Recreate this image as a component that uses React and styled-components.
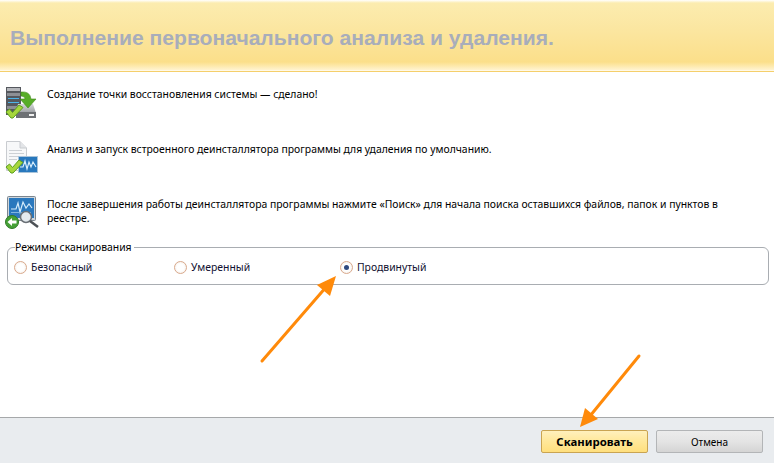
import React from "react";
import styled, { createGlobalStyle } from "styled-components";

const GlobalStyle = createGlobalStyle`
  html, body {
    margin: 0;
    padding: 0;
    background: #fff;
  }
  body {
    font-family: "Noto Sans", "Liberation Sans", Arial, sans-serif;
    overflow: hidden;
  }
`;

const CheckMark = ({ x = 0, y = 0 }) => (
  <path
    transform={`translate(${x} ${y})`}
    d="M0 7 L3.5 4 L6.5 7.5 L13 0 L17 2.5 L7 13 L5 13 Z"
    fill="#a6d63c"
    stroke="#5da01f"
    strokeWidth="1"
  />
);

const RestoreIcon = () => (
  <svg width="34" height="36" viewBox="0 0 34 36">
    <defs>
      <linearGradient id="driveFill" x1="0" y1="0" x2="0" y2="1">
        <stop offset="0" stopColor="#d4d6d8" />
        <stop offset="1" stopColor="#9c9fa3" />
      </linearGradient>
    </defs>
    <rect x="1" y="1" width="15" height="28" fill="#55585e" />
    <rect x="2" y="2" width="13" height="3" fill="#b5b7bb" />
    <rect x="2" y="7" width="13" height="3" fill="#8d9096" />
    <rect x="3" y="12" width="11" height="1" fill="#4cb5ea" />
    <rect x="3" y="16" width="11" height="1" fill="#4cb5ea" />
    <rect x="2" y="20" width="13" height="3" fill="#8d9096" />
    <path d="M13 18 L28 18 L31 27 L11 27 Z" fill="url(#driveFill)" />
    <rect x="11" y="26" width="20" height="6" fill="#6e7175" />
    <rect x="24" y="28" width="5" height="2" fill="#f2f2f2" />
    <path d="M16 6 Q25 5 26 13 L31 13 L23 22 L15 13 L20 13 Q20 10 16 10 Z" fill="#57ad28" stroke="#3f8a1a" strokeWidth="0.6" />
    <CheckMark x={1} y={19} />
  </svg>
);

const UninstallIcon = () => (
  <svg width="34" height="36" viewBox="0 0 34 36">
    <path d="M1.5 0.5 L15 0.5 L21.5 7 L21.5 29.5 L1.5 29.5 Z" fill="#f7f8f9" stroke="#c9ccd0" />
    <path d="M15 0.5 L15 7 L21.5 7" fill="#e3e5e8" stroke="#c9ccd0" />
    <path d="M4 9.5 H17 M4 12.5 H19 M4 15.5 H19 M4 18.5 H12" stroke="#cdd1d5" strokeWidth="1" />
    <rect x="13.5" y="15.5" width="19" height="16" fill="#2878bd" stroke="#a9c4da" />
    <path d="M15 26 L18 26 L20 20 L22 28 L24 21 L26 26 L28 21 L31 26" fill="none" stroke="#d8eefc" strokeWidth="1.2" />
    <CheckMark x={1} y={19} />
  </svg>
);

const ReviewIcon = () => (
  <svg width="34" height="36" viewBox="0 0 34 36">
    <rect x="2.5" y="0.5" width="28" height="24" rx="1" fill="#cfd6dc" stroke="#7b858e" />
    <rect x="4" y="2" width="25" height="20" fill="#2a78bd" />
    <path d="M6 13 L11 13 L13 7 L15 16 L18 6 L21 12 L24 8 L27 12" fill="none" stroke="#d5ecfb" strokeWidth="1.2" />
    <rect x="6" y="16" width="20" height="1" fill="#7fb6e0" />
    <circle cx="21" cy="21" r="5.5" fill="#e4eaee" stroke="#6a7076" strokeWidth="1.5" />
    <path d="M25 25 L33 31" stroke="#4d5156" strokeWidth="2.5" />
    <circle cx="7" cy="26" r="6.5" fill="#45a035" stroke="#2f7a26" />
    <path d="M2.5 26 L7 22 L7 24.5 L11.5 24.5 L11.5 27.5 L7 27.5 L7 30 Z" fill="#fff" />
  </svg>
);

const steps = [
  { id: "restore", icon: <RestoreIcon />, height: 55, text: "Создание точки восстановления системы — сделано!" },
  {
    id: "uninstall",
    icon: <UninstallIcon />,
    height: 55,
    text: "Анализ и запуск встроенного деинсталлятора программы для удаления по умолчанию.",
  },
  {
    id: "review",
    icon: <ReviewIcon />,
    height: 46,
    text: "После завершения работы деинсталлятора программы нажмите «Поиск» для начала поиска оставшихся файлов, папок и пунктов в реестре.",
  },
];

const modes = [
  { id: "safe", label: "Безопасный", width: 160 },
  { id: "moderate", label: "Умеренный", width: 166 },
  { id: "advanced", label: "Продвинутый", checked: true, width: 200 },
];

const App = () => {
  return (
    <Page>
      <GlobalStyle />
      <Header>
        <Title>Выполнение первоначального анализа и удаления.</Title>
      </Header>
      <Content>
        <Steps>
          {steps.map((step) => (
            <Step key={step.id} $height={step.height}>
              <IconBox>{step.icon}</IconBox>
              <StepText>{step.text}</StepText>
            </Step>
          ))}
        </Steps>
        <ModeBox>
          <ModeLegend>Режимы сканирования</ModeLegend>
          {modes.map((mode) => (
            <Mode key={mode.id} $width={mode.width}>
              <Radio $checked={mode.checked} />
              {mode.label}
            </Mode>
          ))}
        </ModeBox>
      </Content>
      <Footer>
        <PrimaryButton>Сканировать</PrimaryButton>
        <CancelButton>Отмена</CancelButton>
      </Footer>
      <Arrows width="774" height="463" viewBox="0 0 774 463">
        <path d="M262 361 L327 286" stroke="#ff8a0a" strokeWidth="3" strokeLinecap="round" />
        <path d="M336 276 L330 296 L317 285 Z" fill="#ff8a0a" />
        <path d="M639 356 L590 416" stroke="#ff8a0a" strokeWidth="3" strokeLinecap="round" />
        <path d="M580 427 L585 408 L598 419 Z" fill="#ff8a0a" />
      </Arrows>
    </Page>
  );
};

export default App;

const Page = styled.div`
  position: relative;
  width: 774px;
  height: 463px;
  display: flex;
  flex-direction: column;
  background: #fff;
  overflow: hidden;
`;

const Header = styled.div`
  height: 72px;
  box-sizing: border-box;
  padding: 26px 0 0 10px;
  flex: none;
  border-bottom: 1px solid #f5cf6b;
  background: linear-gradient(
    180deg,
    #fff 0,
    #fcecaf 3px,
    #fbe6a0 30px,
    #fbdf8a 62px,
    #fff3cf 70px,
    #fff 71px
  );
`;

const Title = styled.h1`
  margin: 0;
  font-family: "Liberation Sans", Arial, sans-serif;
  font-size: 21.1px;
  line-height: 24px;
  font-weight: 700;
  color: #a8adbb;
  white-space: nowrap;
`;

const Content = styled.div`
  flex: 1;
  padding: 12px 4px 0 5px;
`;

const Steps = styled.div`
  display: flex;
  flex-direction: column;
`;

const Step = styled.div`
  display: flex;
  height: ${(p) => p.$height}px;
`;

const IconBox = styled.div`
  width: 42px;
  padding-top: 2px;
  flex: none;
`;

const StepText = styled.p`
  margin: 3px 0 0;
  width: 690px;
  font-size: 10.4px;
  line-height: 14px;
  color: #000;
`;

const ModeBox = styled.fieldset`
  display: flex;
  align-items: flex-start;
  width: 762px;
  height: 45px;
  box-sizing: border-box;
  margin: 0 0 0 2px;
  padding: 6px 0 0 6px;
  border: 1px solid #a9adb2;
  border-radius: 6px;
`;

const ModeLegend = styled.legend`
  padding: 0 2px 0 0;
  margin-left: 1px;
  font-size: 10.4px;
  line-height: 14px;
  color: #000;
`;

const Mode = styled.label`
  display: flex;
  align-items: center;
  gap: 4px;
  width: ${(p) => p.$width}px;
  flex: none;
  font-size: 10.4px;
  line-height: 14px;
  color: #101030;
`;

const Radio = styled.span`
  position: relative;
  width: 13px;
  height: 13px;
  box-sizing: border-box;
  border-radius: 50%;
  border: 1px solid #d9a98c;
  background: radial-gradient(circle, #fff 45%, #efe9e0 100%);

  &::after {
    content: "";
    display: ${(p) => (p.$checked ? "block" : "none")};
    position: absolute;
    left: 3px;
    top: 3px;
    width: 5px;
    height: 5px;
    border-radius: 50%;
    background: #2f4a80;
  }
`;

const Footer = styled.div`
  height: 46px;
  box-sizing: border-box;
  flex: none;
  display: flex;
  gap: 8px;
  padding: 12px 11px 0 0;
  justify-content: flex-end;
  align-items: flex-start;
  background: #e9ecef;
  border-top: 1px solid #a6a8aa;
`;

const BaseButton = styled.button`
  width: 107px;
  height: 23px;
  box-sizing: border-box;
  padding: 0;
  border-radius: 2px;
  font-family: "Noto Sans", "Liberation Sans", Arial, sans-serif;
  color: #000;
`;

const PrimaryButton = styled(BaseButton)`
  font-size: 11.4px;
  font-weight: 700;
  border: 1px solid #c9a452;
  background: linear-gradient(180deg, #fff0bd 0%, #ffe89c 45%, #ffdf7d 100%);
`;

const CancelButton = styled(BaseButton)`
  font-size: 10px;
  border: 1px solid #b3b5b7;
  background: linear-gradient(180deg, #ececec 0%, #e4e4e4 50%, #d4d4d4 100%);
`;

const Arrows = styled.svg`
  position: absolute;
  left: 0;
  top: 0;
  pointer-events: none;
`;
